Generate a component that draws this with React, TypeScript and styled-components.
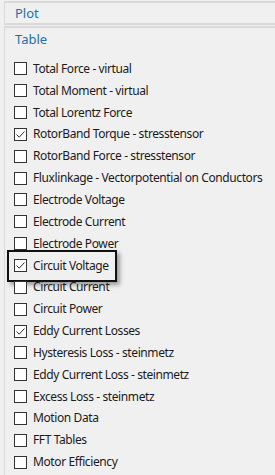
import * as React from "react";
import styled, { createGlobalStyle } from "styled-components";

const GlobalStyle = createGlobalStyle`
  html, body {
    margin: 0;
    padding: 0;
    background: #f0f0f0;
  }
  body {
    font-family: "Segoe UI", "Noto Sans", "Liberation Sans", sans-serif;
    font-size: 12px;
    color: #1b1b1b;
  }
`;

interface ResultItem {
  label: string;
  checked?: boolean;
  highlighted?: boolean;
}

const items: ResultItem[] = [
  { label: "Total Force - virtual" },
  { label: "Total Moment - virtual" },
  { label: "Total Lorentz Force" },
  { label: "RotorBand Torque - stresstensor", checked: true },
  { label: "RotorBand Force - stresstensor" },
  { label: "Fluxlinkage - Vectorpotential on Conductors" },
  { label: "Electrode Voltage" },
  { label: "Electrode Current" },
  { label: "Electrode Power" },
  { label: "Circuit Voltage", checked: true, highlighted: true },
  { label: "Circuit Current" },
  { label: "Circuit Power" },
  { label: "Eddy Current Losses", checked: true },
  { label: "Hysteresis Loss - steinmetz" },
  { label: "Eddy Current Loss - steinmetz" },
  { label: "Excess Loss - steinmetz" },
  { label: "Motion Data" },
  { label: "FFT Tables" },
  { label: "Motor Efficiency" },
];

const Panel = styled.div`
  width: 275px;
  height: 475px;
  overflow: hidden;
  box-sizing: border-box;
  padding: 1px 0 0 4px;
  display: flex;
  flex-direction: column;
  gap: 1px;
`;

const SectionHeader = styled.div`
  height: 24px;
  box-sizing: border-box;
  border-top: 2px solid #dadada;
  border-left: 1px solid #dadada;
  border-bottom: 2px solid #dadada;
  padding-left: 10px;
  display: flex;
  align-items: center;
  color: #1f6fa6;
  font-size: 13px;
`;

const TableBox = styled.div`
  flex: 1;
  border-top: 2px solid #dadada;
  border-left: 1px solid #dadada;
  display: flex;
  flex-direction: column;
`;

const TableTitle = styled.div`
  height: 20px;
  padding-left: 10px;
  display: flex;
  align-items: center;
  color: #1f6fa6;
  font-size: 13px;
  margin: 1px 0 9px;
`;

const Row = styled.div<{ $highlighted?: boolean }>`
  position: relative;
  height: 21.85px;
  display: flex;
  align-items: center;
  gap: 6px;
  padding-left: 9px;
  white-space: nowrap;
  letter-spacing: -0.4px;

  ${(p) =>
    p.$highlighted &&
    `
    &::after {
      content: "";
      position: absolute;
      left: 2px;
      top: -5px;
      width: 106px;
      height: 28px;
      border: 2.5px solid #111;
      box-shadow: 3px 3px 4px rgba(0, 0, 0, 0.35);
      pointer-events: none;
    }
  `}
`;

const Box = styled.span`
  width: 13px;
  height: 13px;
  box-sizing: border-box;
  border: 1px solid #333;
  background: #fff;
  display: flex;
  align-items: center;
  justify-content: center;
  flex-shrink: 0;
`;

const Label = styled.span`
  line-height: 16px;
`;

const Check = () => (
  <svg width="11" height="11" viewBox="0 0 11 11">
    <path d="M1.5 5.5 L4.2 8.2 L9.5 2.5" fill="none" stroke="#333" strokeWidth="1" />
  </svg>
);

export default function App() {
  return (
    <>
      <GlobalStyle />
      <Panel>
        <SectionHeader>Plot</SectionHeader>
        <TableBox>
          <TableTitle>Table</TableTitle>
          {items.map((it) => (
            <Row key={it.label} $highlighted={it.highlighted}>
              <Box>{it.checked && <Check />}</Box>
              <Label>{it.label}</Label>
            </Row>
          ))}
        </TableBox>
      </Panel>
    </>
  );
}
